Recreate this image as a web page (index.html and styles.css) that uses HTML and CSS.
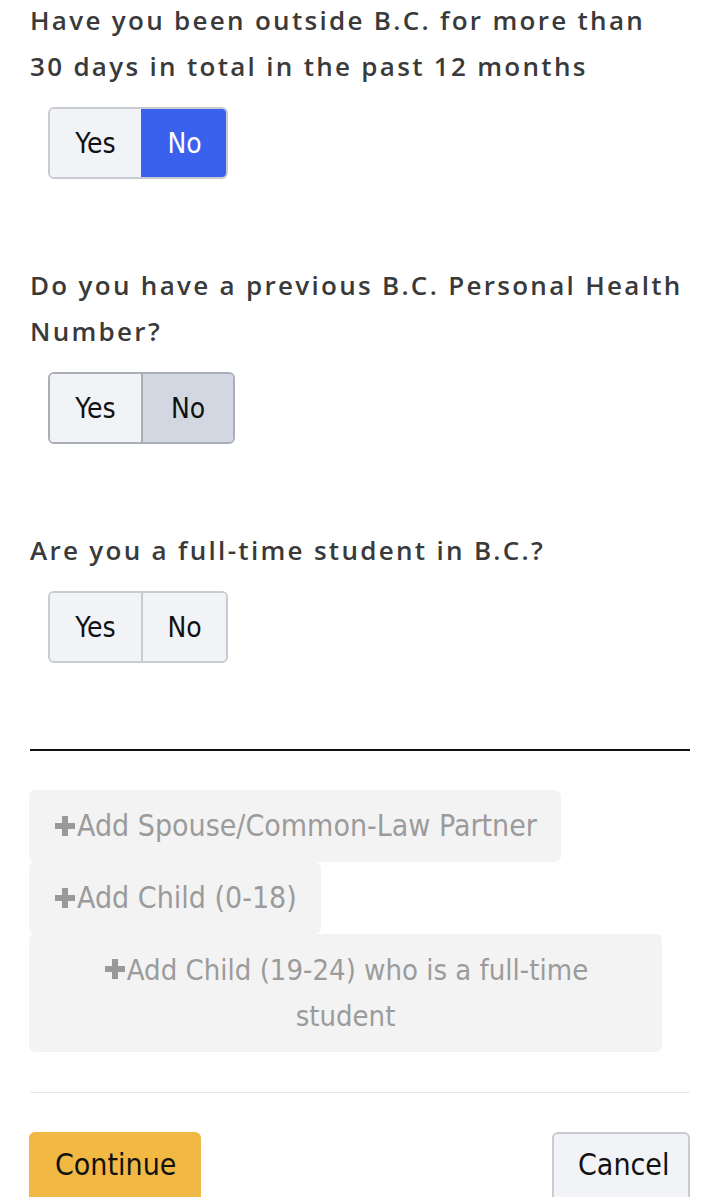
FILE: index.html
```html
<!DOCTYPE html>
<html lang="en">
<head>
    <meta charset="UTF-8">
    <meta name="viewport" content="width=device-width, initial-scale=1.0">
    <title>Application - Residency</title>
    <link rel="stylesheet" href="styles.css">
</head>
<body>
    <div class="page">
        <div class="question first">
            <p class="label">Have you been outside B.C. for more than 30 days in total in the past 12 months</p>
            <div class="toggle">
                <button class="opt">Yes</button>
                <button class="opt active">No</button>
            </div>
        </div>

        <div class="question">
            <p class="label">Do you have a previous B.C. Personal Health Number?</p>
            <div class="toggle">
                <button class="opt">Yes</button>
                <button class="opt focused">No</button>
            </div>
        </div>

        <div class="question">
            <p class="label">Are you a full-time student in B.C.?</p>
            <div class="toggle">
                <button class="opt">Yes</button>
                <button class="opt">No</button>
            </div>
        </div>

        <hr class="rule">

        <div class="add-list">
            <button class="add-btn"><svg class="plus" viewBox="0 0 24 24"><path d="M9 2h6v7h7v6h-7v7H9v-7H2V9h7z"/></svg>Add Spouse/Common-Law Partner</button>
            <button class="add-btn"><svg class="plus" viewBox="0 0 24 24"><path d="M9 2h6v7h7v6h-7v7H9v-7H2V9h7z"/></svg>Add Child (0-18)</button>
            <button class="add-btn wide"><svg class="plus" viewBox="0 0 24 24"><path d="M9 2h6v7h7v6h-7v7H9v-7H2V9h7z"/></svg>Add Child (19-24) who is a full-time student</button>
        </div>

        <hr class="rule light">

        <div class="actions">
            <button class="btn primary">Continue</button>
            <button class="btn cancel">Cancel</button>
        </div>
    </div>
</body>
</html>
```

FILE: styles.css
```css
body {
    margin: 0;
    padding: 0;
    background: #fff;
    color: #333;
    font-family: "Open Sans", "Noto Sans", sans-serif;
}
.page {
    padding: 0 30px 0 29px;
}
.question {
    margin-top: 83px;
}
.question.first {
    margin-top: -3px;
}
.label {
    max-width: 655px;
    margin: 0 0 18px 1px;
    font-size: 26px;
    font-weight: 600;
    line-height: 46px;
    letter-spacing: 2.3px;
    color: #3a3a3a;
}
.toggle {
    display: inline-flex;
    margin-left: 19px;
    border: 2px solid #c8cbd1;
    border-radius: 6px;
    overflow: hidden;
}
.opt {
    height: 68px;
    padding: 0 24px;
    border: none;
    background: #f2f3f7;
    color: #111;
    font-family: "Liberation Sans Narrow", "DejaVu Sans Condensed", sans-serif;
    font-size: 28px;
}
.opt + .opt {
    border-left: 2px solid #c8cbd1;
}
.opt:first-child {
    width: 91px;
}
.opt.active {
    background: #3a60ee;
    color: #fff;
    border-left-color: #3a60ee;
    width: 85px;
}
.opt.focused {
    background: #d2d7e2;
    border-left-color: #a9aeb8;
    width: 92px;
}
.opt:last-child:not(.active):not(.focused) {
    width: 85px;
}
.toggle:has(.focused) {
    border-color: #a9aeb8;
}
.rule {
    margin: 86px 0 39px 1px;
    border: none;
    border-top: 2px solid #111;
}
.rule.light {
    margin: 40px 0 39px 1px;
    border-top: 1px solid #e6e6e6;
}
.add-list {
    display: flex;
    flex-direction: column;
    align-items: flex-start;
}
.add-btn {
    display: flex;
    align-items: center;
    justify-content: center;
    flex-wrap: wrap;
    padding: 13px 24px;
    border: none;
    border-radius: 6px;
    background: #f3f3f3;
    color: #9b9b9b;
    font-family: "Liberation Sans Narrow", "DejaVu Sans Condensed", sans-serif;
    font-size: 30px;
    line-height: 46px;
    text-align: center;
}
.add-btn.wide {
    display: block;
    width: 633px;
    padding: 13px 60px;
    font-size: 29px;
}
.plus {
    width: 24px;
    height: 24px;
    fill: #999;
    vertical-align: -1px;
}
.actions {
    display: flex;
    justify-content: space-between;
}
.btn {
    padding: 8px 24px 20px;
    border: 2px solid #c8cbd1;
    border-radius: 6px;
    background: #f2f3f7;
    color: #111;
    font-family: "Liberation Sans Narrow", "DejaVu Sans Condensed", sans-serif;
    font-size: 30px;
    line-height: 46px;
}
.btn.primary {
    background: #f1b944;
    border-color: #f1b944;
    width: 172px;
}
.btn.cancel {
    width: 138px;
}
```
